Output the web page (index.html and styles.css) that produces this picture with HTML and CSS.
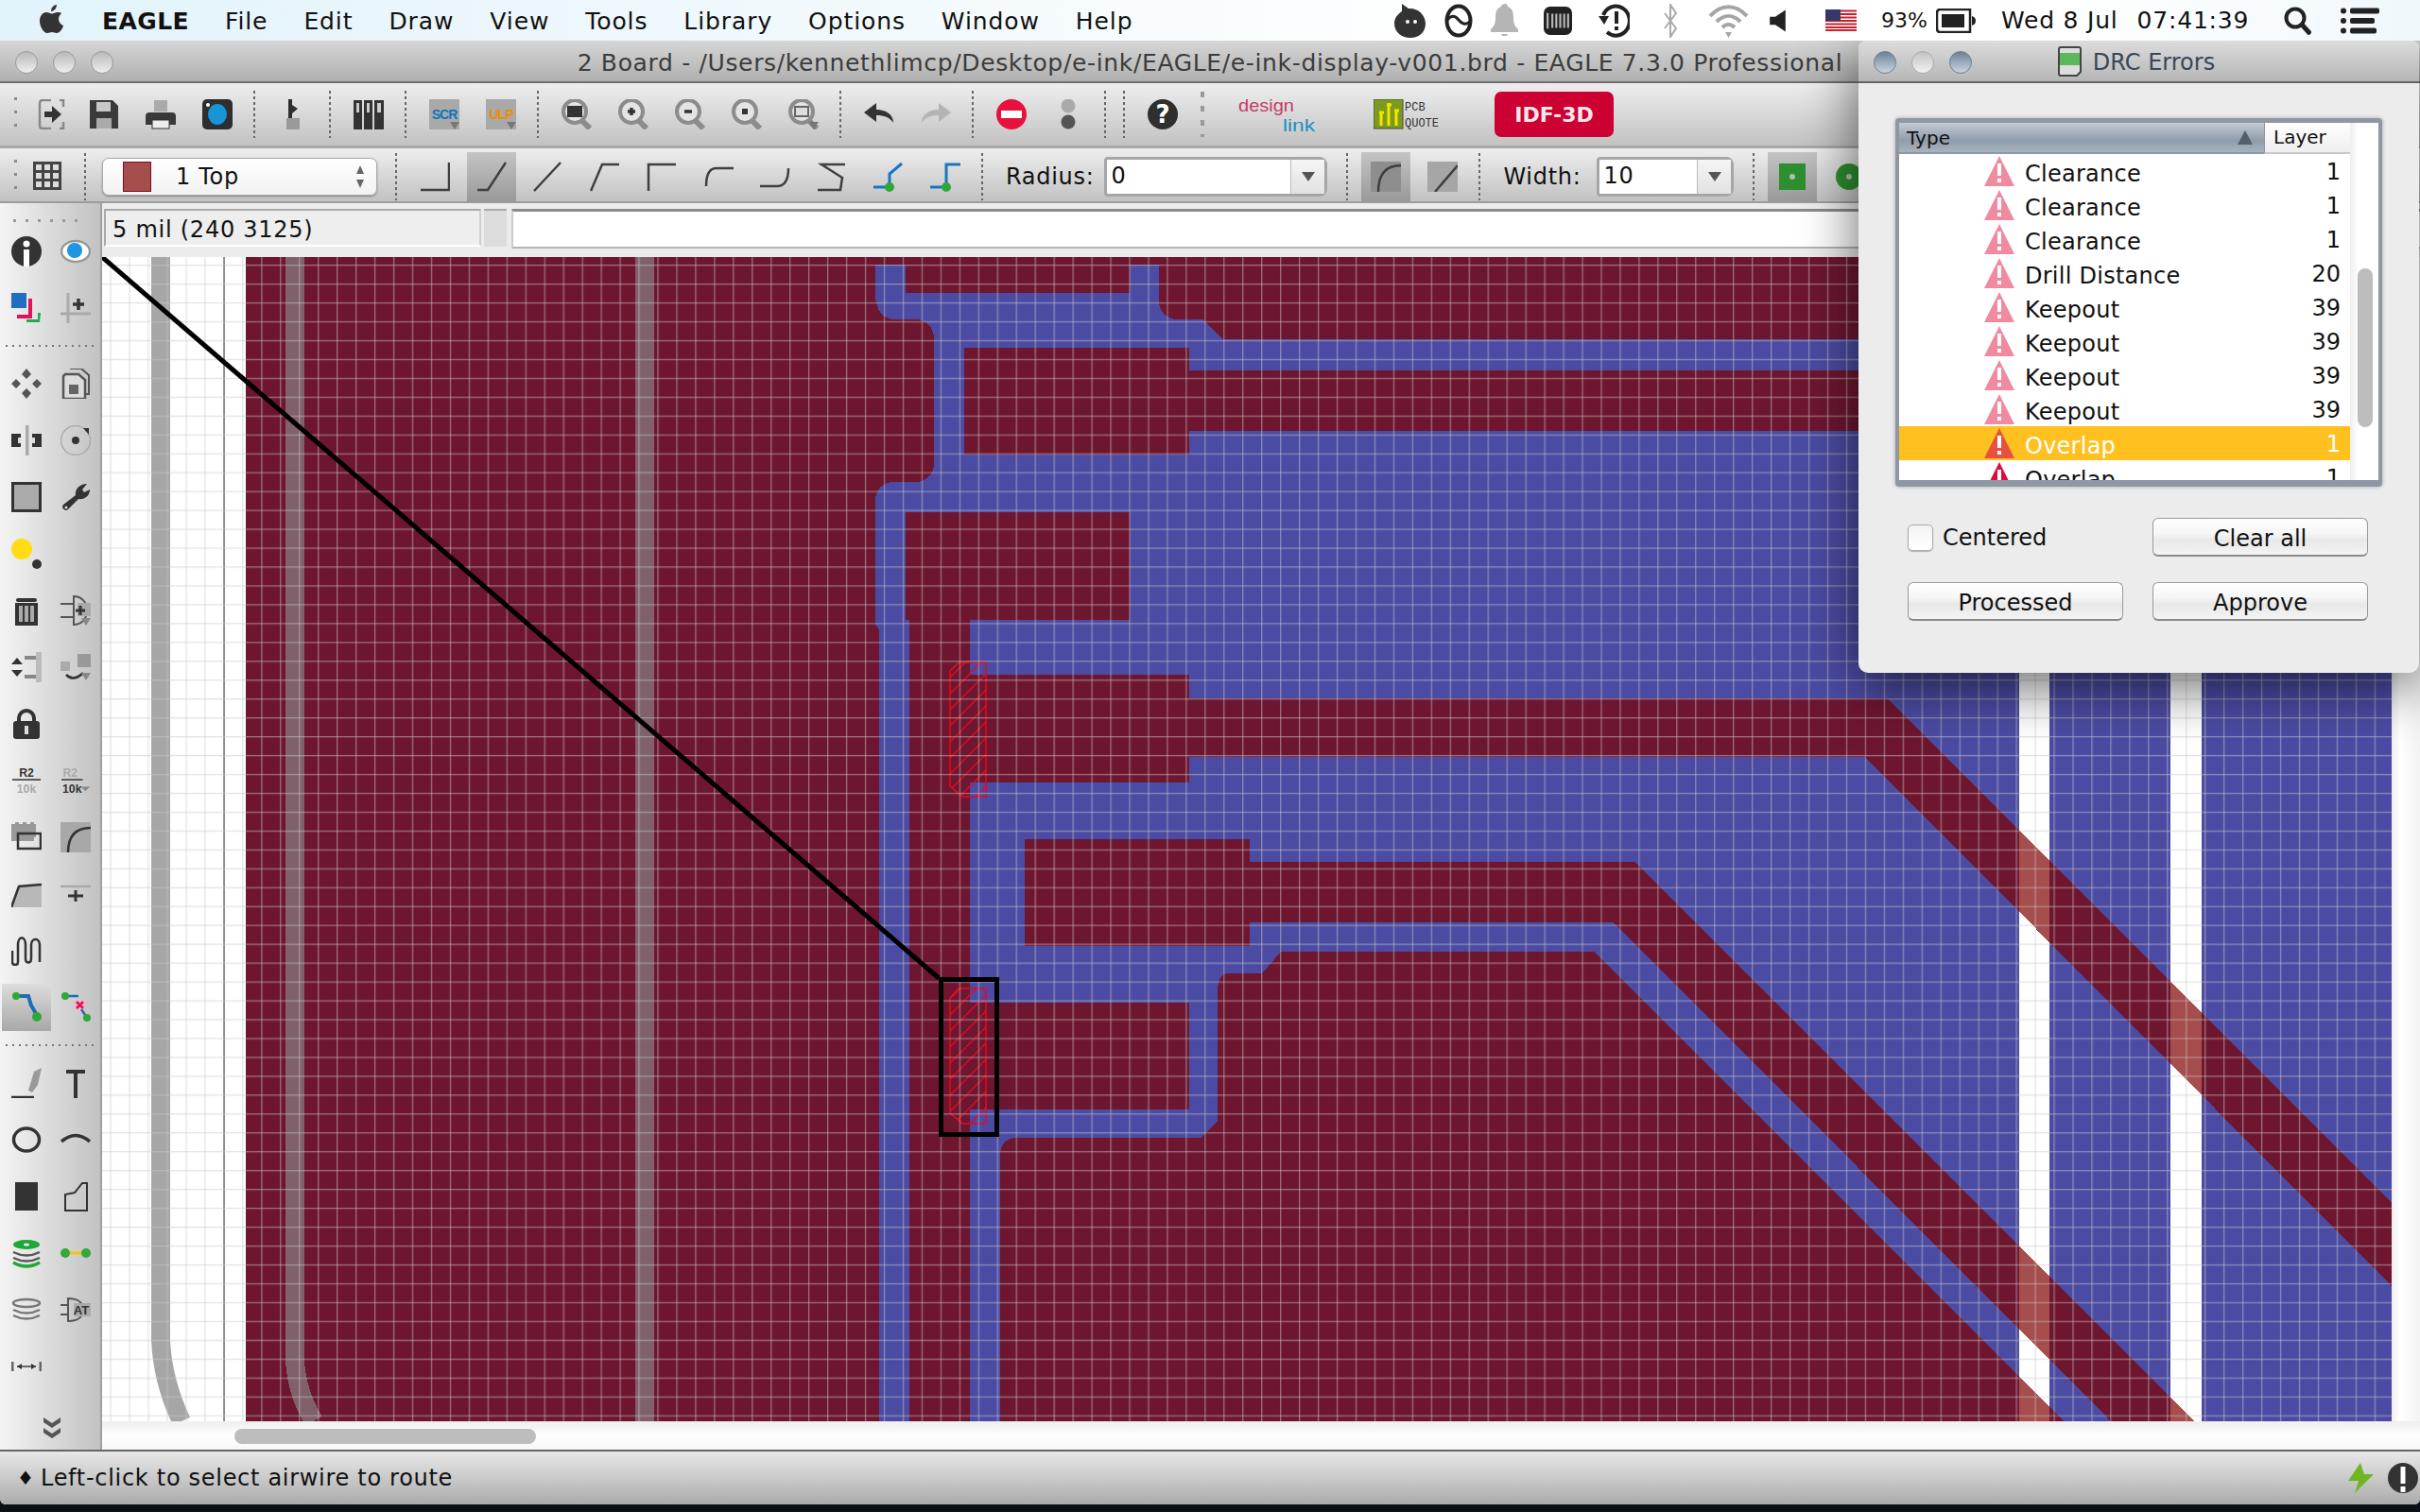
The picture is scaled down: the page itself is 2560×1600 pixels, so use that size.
FILE: index.html
```html
<!DOCTYPE html>
<html lang="en">
<head>
  <meta charset="UTF-8">
  <title>EAGLE - e-ink-display-v001.brd</title>
  <link rel="stylesheet" href="styles.css">
</head>
<body>

<svg class="defs" width="0" height="0">
  <symbol id="warn" viewBox="0 0 32 32">
    <path d="M16 0L32 32H0z" fill="currentColor"/>
    <rect x="14" y="8" width="4" height="13" fill="#fff"/>
    <rect x="14" y="24" width="4" height="4" fill="#fff"/>
  </symbol>
  <symbol id="lens" viewBox="0 0 32 32">
    <circle cx="14" cy="13" r="12" fill="#e4e4e4" stroke="#8c8c8c" stroke-width="4"/>
    <path d="M22 23l8 8" stroke="#8c8c8c" stroke-width="6"/>
  </symbol>
</svg>

<div class="menubar">
  <svg class="apple" viewBox="0 0 30 30"><path d="M21 8c-3 0-4 1.500-6 1.500S12 8 9 8C5 8 2 12 2 17c0 6 4 13 8 13 2 0 3-1 5-1s3 1 5 1c3 0 6-4 7-8-3-1-5-4-5-7 0-2 1-4 3-6-1-1-2-1-4-1zM20 0c0 4-3 7-6 7 0-4 3-7 6-7z" fill="#333"/></svg>
  <nav class="menus">
    <b>EAGLE</b><span>File</span><span>Edit</span><span>Draw</span><span>View</span><span>Tools</span><span>Library</span><span>Options</span><span>Window</span><span>Help</span>
  </nav>
  <div class="status-items">
    <svg class="st st-a" viewBox="0 0 33 36"><path d="M8 0l7 5c9-1 18 6 18 16 0 9-7 15-16 15S0 30 0 21C0 14 5 10 8 8z" fill="#333"/><circle cx="14" cy="19" r="2" fill="#fff"/><circle cx="22" cy="19" r="2" fill="#fff"/></svg>
    <svg class="st st-b" viewBox="0 0 30 36"><ellipse cx="15" cy="18" rx="12.500" ry="15.500" fill="none" stroke="#222" stroke-width="4"/><path d="M3 17c5-6 9-4 12 0s7 6 12 2" fill="none" stroke="#222" stroke-width="3"/></svg>
    <svg class="st st-c" viewBox="0 0 29 36"><path d="M15 0c2 0 3 1 3 3 5 2 6 6 6 12 0 7 2 9 5 12v3H0v-3c3-3 5-5 5-12 0-6 1-10 6-12 0-2 2-3 4-3zM11 32h7c0 3-7 3-7 0z" fill="#b5b5b5"/></svg>
    <svg class="st st-d" viewBox="0 0 36 36"><rect width="36" height="36" rx="8" fill="#222"/><path d="M5 8v20M11 9v18M16 9v18M21 9v18M26 9v18M31 9v18" stroke="#bbb" stroke-width="2.500"/></svg>
    <svg class="st st-e" viewBox="0 0 33 36"><path d="M5 12A14.500 15.500 0 1 1 9 30" fill="none" stroke="#222" stroke-width="4"/><path d="M0 13h11l-5 9z" fill="#222"/><rect x="17" y="8" width="4" height="13" fill="#222"/><rect x="17" y="24" width="4" height="4" fill="#222"/></svg>
    <svg class="st st-f" viewBox="0 0 16 36"><path d="M2 10l12 16-6 9V1l6 9L2 26" fill="none" stroke="#aaa" stroke-width="2"/></svg>
    <svg class="st st-g" viewBox="0 0 43 36"><path d="M2 13C14 0 29 0 41 13M9 19c8-8 17-8 25 0M15 25c4-4 9-4 13 0" fill="none" stroke="#a5a5a5" stroke-width="4"/><path d="M18 30h7l-3.500 6z" fill="#a5a5a5"/></svg>
    <svg class="st st-h" viewBox="0 0 23 36"><path d="M0 12h8l15-10v32L8 24H0z" fill="#222"/></svg>
    <svg class="st st-i" viewBox="0 0 33 23"><rect width="33" height="23" fill="#fff"/><path d="M0 1.500h33M0 5h33M0 8.500h33M0 12h33M0 15.500h33M0 19h33M0 22h33" stroke="#c8202f" stroke-width="1.800"/><rect width="16" height="12" fill="#33396b"/></svg>
    <span class="st-pct">93%</span>
    <svg class="st st-bat" viewBox="0 0 43 26"><path d="M4 1h32v24H4Q1 25 1 21V5q0-4 3-4z" fill="none" stroke="#222" stroke-width="2.500"/><rect x="6" y="6" width="24" height="14" fill="#222"/><path d="M38 8q4 1 4 5t-4 5z" fill="#222"/></svg>
    <span class="st-date">Wed 8 Jul</span>
    <span class="st-time">07:41:39</span>
    <svg class="st st-s" viewBox="0 0 29 30"><circle cx="12" cy="12" r="9.500" fill="none" stroke="#222" stroke-width="4"/><path d="M19 19l9 10" stroke="#222" stroke-width="5"/></svg>
    <svg class="st st-l" viewBox="0 0 41 28"><circle cx="3" cy="3.500" r="3" fill="#222"/><circle cx="3" cy="14" r="3" fill="#222"/><circle cx="3" cy="24.500" r="3" fill="#222"/><rect x="10" y="0.500" width="31" height="6" rx="2" fill="#222"/><rect x="10" y="11" width="26" height="6" rx="2" fill="#222"/><rect x="10" y="21.500" width="28" height="6" rx="2" fill="#222"/></svg>
  </div>
</div>

<div class="main-win">
  <header class="titlebar">
    <div class="lights"><i></i><i></i><i></i></div>
    <span class="title-text">2 Board - /Users/kennethlimcp/Desktop/e-ink/EAGLE/e-ink-display-v001.brd - EAGLE 7.3.0 Professional</span>
  </header>

  <div class="toolbar tb1">
    <i class="handle"></i>
    <svg class="ico ico-open" viewBox="0 0 32 32"><path d="M15 1H6Q3 1 3 4V28Q3 31 6 31H15M24 1H28V8M28 24V31H24" fill="none" stroke="#888" stroke-width="2.500"/><path d="M8 13h8V7l10 9-10 9v-6H8z" fill="#333"/></svg>
    <svg class="ico" viewBox="0 0 32 32"><path d="M1 1h24l6 6v24H1z" fill="#3a3a3a"/><rect x="8" y="3" width="15" height="10" fill="#c8c8c8"/><rect x="8" y="20" width="16" height="11" fill="#aaa"/></svg>
    <svg class="ico" viewBox="0 0 32 32"><rect x="9" y="1" width="14" height="12" fill="#aaa"/><path d="M4 14h24q4 0 4 4v9H0v-9q0-4 4-4z" fill="#3a3a3a"/><rect x="7" y="22" width="18" height="9" fill="#eee" stroke="#333"/></svg>
    <svg class="ico" viewBox="0 0 32 32"><rect width="32" height="32" rx="5" fill="#2e2e2e"/><ellipse cx="16" cy="16" rx="10" ry="11" fill="#1894d8"/><circle cx="6" cy="6" r="2" fill="#fff"/></svg>
    <i class="sep"></i>
    <svg class="ico" viewBox="0 0 32 32"><path d="M11 0h4v6l6 4-6 5v5h-4z" fill="#2f2f2f"/><rect x="9" y="20" width="14" height="12" fill="#9a9a9a"/></svg>
    <i class="sep"></i>
    <svg class="ico" viewBox="0 0 32 32"><path d="M0 1h9v31H0zM11 1h9v31h-9zM22 1h10v31H22z" fill="#333"/><path d="M3 4h3v10H3zM14 4h3v10h-3zM25 4h4v10h-4z" fill="#ccc"/></svg>
    <i class="sep"></i>
    <svg class="ico" viewBox="0 0 32 32"><rect width="32" height="32" fill="#a9a9a9"/><text class="tag" x="16" y="21" fill="#0f75bd">SCR</text><path d="M22 24h10l-5 8z" fill="#777"/></svg>
    <svg class="ico" viewBox="0 0 32 32"><rect width="32" height="32" fill="#a9a9a9"/><text class="tag" x="16" y="21" fill="#f08c00">ULP</text><path d="M22 24h10l-5 8z" fill="#777"/></svg>
    <i class="sep"></i>
    <svg class="ico" viewBox="0 0 32 32"><use href="#lens"/><rect x="6" y="7" width="16" height="12" fill="#333"/></svg>
    <svg class="ico" viewBox="0 0 32 32"><use href="#lens"/><path d="M10 13h8M14 9v8" stroke="#333" stroke-width="3.500"/></svg>
    <svg class="ico" viewBox="0 0 32 32"><use href="#lens"/><path d="M10 13h8" stroke="#333" stroke-width="3.500"/></svg>
    <svg class="ico" viewBox="0 0 32 32"><use href="#lens"/><rect x="11" y="10" width="6" height="6" fill="#333"/></svg>
    <svg class="ico" viewBox="0 0 32 32"><use href="#lens"/><rect x="7" y="8" width="14" height="10" fill="#ddd" stroke="#666" stroke-width="2"/><path d="M22 24h10l-5 8z" fill="#777"/></svg>
    <i class="sep"></i>
    <svg class="ico" viewBox="0 0 32 32"><path d="M0 14L13 4v7c10 0 18 5 18 14-4-6-10-8-18-8v7z" fill="#333"/></svg>
    <svg class="ico" viewBox="0 0 32 32"><path d="M32 14L19 4v7C9 11 1 16 1 25c4-6 10-8 18-8v7z" fill="#b4b4b4"/></svg>
    <i class="sep"></i>
    <svg class="ico" viewBox="0 0 32 32"><circle cx="16" cy="16" r="16" fill="#e6123d"/><rect x="5" y="12" width="22" height="8" fill="#fff"/></svg>
    <svg class="ico" viewBox="0 0 32 32"><circle cx="16" cy="7" r="7.500" fill="#aaa"/><circle cx="16" cy="24" r="7.500" fill="#555"/></svg>
    <i class="sep"></i><i class="sep"></i>
    <svg class="ico" viewBox="0 0 32 32"><circle cx="16" cy="16" r="16" fill="#2f2f2f"/><text class="q" x="16" y="25" fill="#fff">?</text></svg>
    <i class="sep sep-bold"></i>
    <svg class="logo-dl" viewBox="0 0 82 42"><text class="dl" x="0" y="18" textLength="59" lengthAdjust="spacingAndGlyphs" fill="#c83a66">design</text><text class="dl" x="47" y="39" textLength="34" lengthAdjust="spacingAndGlyphs" fill="#1a8fc0">link</text></svg>
    <svg class="logo-pcb" viewBox="0 0 70 32"><rect width="31" height="31" fill="#7c9a1e" stroke="#445"/><path d="M8 28V14M16 28V4M24 28V12M6 14h5M14 6h5M22 12h5" stroke="#f4e600" stroke-width="3"/><text class="pq" x="33" y="12">PCB</text><text class="pq" x="33" y="29">QUOTE</text></svg>
    <div class="idf">IDF-3D</div>
  </div>

  <div class="toolbar tb2">
    <i class="handle"></i>
    <svg class="ico" viewBox="0 0 32 32"><rect width="30" height="30" fill="#444"/><path d="M3 3h6v6H3zM12 3h6v6h-6zM21 3h6v6h-6zM3 12h6v6H3zM12 12h6v6h-6zM21 12h6v6h-6zM3 21h6v6H3zM12 21h6v6h-6zM21 21h6v6h-6z" fill="#ddd"/></svg>
    <i class="sep"></i>
    <div class="layer-select">
      <i class="swatch"></i><span>1 Top</span>
      <svg class="updown" viewBox="0 0 10 24"><path d="M5 0l4 9H1zM5 24l-4-9h8z" fill="#666"/></svg>
    </div>
    <i class="sep"></i>
    <svg class="ico w" viewBox="0 0 32 32"><path d="M1 30H31V1"/></svg>
    <svg class="ico w on" viewBox="0 0 32 32"><path d="M1 30H12L31 1"/></svg>
    <svg class="ico w" viewBox="0 0 32 32"><path d="M1 31L29 1"/></svg>
    <svg class="ico w" viewBox="0 0 32 32"><path d="M1 31L13 3H31"/></svg>
    <svg class="ico w" viewBox="0 0 32 32"><path d="M2 31V3H31"/></svg>
    <svg class="ico w" viewBox="0 0 32 32"><path d="M3 26Q3 7 14 7H32"/></svg>
    <svg class="ico w" viewBox="0 0 32 32"><path d="M0 26H18Q30 26 30 7"/></svg>
    <svg class="ico w" viewBox="0 0 32 32"><path d="M30 3H5L27 17L25 30H1"/></svg>
    <svg class="ico" viewBox="0 0 32 32"><path d="M0 27H13M17 27V13L30 2" fill="none" stroke="#1976c2" stroke-width="3"/><circle cx="17" cy="27" r="5" fill="#2fa838"/></svg>
    <svg class="ico" viewBox="0 0 32 32"><path d="M0 27H13M17 27V3H32" fill="none" stroke="#1976c2" stroke-width="3"/><circle cx="17" cy="27" r="5" fill="#2fa838"/></svg>
    <i class="sep"></i>
    <label class="lbl">Radius:</label>
    <div class="combo combo-r"><span>0</span><b><i></i></b></div>
    <i class="sep"></i>
    <svg class="ico w on" viewBox="0 0 32 32"><rect width="32" height="32" fill="#8e8e8e"/><path d="M8 32Q8 4 32 4"/></svg>
    <svg class="ico w" viewBox="0 0 32 32"><rect width="32" height="32" fill="#a6a6a6"/><path d="M8 32L32 4"/></svg>
    <i class="sep"></i>
    <label class="lbl">Width:</label>
    <div class="combo combo-w"><span>10</span><b><i></i></b></div>
    <i class="sep"></i>
    <svg class="ico on" viewBox="0 0 32 32"><rect x="2" y="2" width="28" height="28" fill="#2e8f2e"/><circle cx="16" cy="16" r="3" fill="#bbb"/></svg>
    <svg class="ico" viewBox="0 0 32 32"><circle cx="16" cy="16" r="14" fill="#2e8f2e"/><circle cx="16" cy="16" r="3" fill="#bbb"/></svg>
  </div>

  <div class="workspace">
    <aside class="tools">
      <i class="tool-handle"></i>
      <div class="tool-grp">
        <svg class="ico" viewBox="0 0 32 32"><circle cx="16" cy="16" r="16" fill="#333"/><rect x="13" y="14" width="6" height="18" fill="#fff"/><circle cx="16" cy="8" r="3.500" fill="#fff"/></svg>
        <svg class="ico" viewBox="0 0 32 32"><ellipse cx="16" cy="16" rx="15" ry="11" fill="#fff" stroke="#999" stroke-width="2.500"/><ellipse cx="15" cy="15" rx="8" ry="8" fill="#1d95e0"/></svg>
        <svg class="ico" viewBox="0 0 32 32"><path d="M8 27h12V10h4v21H8z" transform="translate(-2 -4)" fill="#e2135a"/><path d="M16 26h14l1-10h-3v7H16z" transform="translate(0 5)" fill="#22a85a"/><rect width="16" height="16" fill="#1f6fc0"/></svg>
        <svg class="ico" viewBox="0 0 32 32"><path d="M8 0v32M0 22h32" stroke="#aaa" stroke-width="3"/><path d="M19 6v12M13 12h12" stroke="#333" stroke-width="3.500"/></svg>
      </div>
      <i class="tool-sep"></i>
      <div class="tool-grp">
        <svg class="ico" viewBox="0 0 32 32"><path d="M16 0l5 6-5 5-5-5zM16 21l5 5-5 6-5-6zM0 16l5-5 5 5-5 5zM22 16l5-5 5 5-5 5z" fill="#555"/></svg>
        <svg class="ico" viewBox="0 0 32 32"><path d="M10 0h12l8 7v20H24" fill="none" stroke="#555" stroke-width="2"/><path d="M5 6h14l7 6v20H3V8z" fill="#ddd" stroke="#555" stroke-width="2.500"/><rect x="9" y="17" width="10" height="10" fill="#666"/></svg>
        <svg class="ico" viewBox="0 0 32 32"><rect x="15" width="3.500" height="32" fill="#aaa"/><path d="M0 9h10v14H0zM22 9h10v14H22z" fill="#333"/><path d="M7 13h3v6H7zM22 13h3v6h-3z" fill="#ddd"/></svg>
        <svg class="ico" viewBox="0 0 32 32"><circle cx="16" cy="16" r="15.500" fill="none" stroke="#aaa" stroke-width="1.500"/><circle cx="16" cy="16" r="4" fill="#333"/><path d="M24 3h6v7z" fill="#333"/></svg>
        <svg class="ico" viewBox="0 0 32 32"><rect x="1.500" y="1.500" width="29" height="29" fill="#aaa" stroke="#333" stroke-width="3"/></svg>
        <svg class="ico" viewBox="0 0 32 32"><path d="M3 24L16 14c-1-6 4-12 12-12l-5 6 2 3 6-3c0 7-6 11-12 10L8 29c-3 3-8-2-5-5z" fill="#333"/><circle cx="6" cy="27" r="1.500" fill="#ddd"/></svg>
        <svg class="ico" viewBox="0 0 32 32"><circle cx="11" cy="11" r="11" fill="#ffdc14"/><circle cx="27" cy="27" r="5" fill="#333"/></svg>
        <i class="blank"></i>
        <svg class="ico" viewBox="0 0 32 32"><rect x="5" y="3" width="22" height="4" rx="2" fill="#333"/><path d="M4 8h24v24H4z" fill="#333"/><path d="M8 11h4v17H8zM14 11h4v17h-4zM20 11h4v17h-4z" fill="#aaa"/></svg>
        <svg class="ico" viewBox="0 0 32 32"><path d="M14 1c8 0 14 6 14 15s-6 15-14 15zM0 9h14M0 23h14" fill="none" stroke="#555" stroke-width="2"/><rect x="18" y="8" width="14" height="14" fill="#aaa"/><path d="M16 16h10M21 11v10" stroke="#333" stroke-width="3"/><path d="M22 24h10l-5 8z" fill="#888"/></svg>
        <svg class="ico" viewBox="0 0 32 32"><path d="M6 6l6 7H0zM6 26l6-7H0z" fill="#333"/><path d="M14 6h14M14 26h14" stroke="#888" stroke-width="4"/><rect x="26" width="6" height="32" fill="#bbb"/></svg>
        <svg class="ico" viewBox="0 0 32 32"><rect y="10" width="10" height="10" fill="#aaa"/><rect x="18" y="2" width="14" height="14" fill="#999"/><path d="M6 24q8 8 18-2" fill="none" stroke="#333" stroke-width="2.500"/><path d="M22 22h10l-5 8z" fill="#888"/></svg>
        <svg class="ico" viewBox="0 0 32 32"><path d="M6 14V10a10 10 0 0 1 20 0v4h-4V10a6 6 0 0 0-12 0v4z" fill="#333"/><rect x="2" y="13" width="28" height="19" rx="3" fill="#333"/><rect x="14" y="18" width="4" height="9" fill="#ddd"/></svg>
        <i class="blank"></i>
        <svg class="ico" viewBox="0 0 32 34"><text class="r2" x="16" y="13" fill="#333">R2</text><rect y="15" width="32" height="2" fill="#555"/><text class="r2" x="16" y="31" fill="#aaa">10k</text></svg>
        <svg class="ico" viewBox="0 0 32 34"><text class="r2" x="10" y="13" fill="#aaa">R2</text><rect y="15" width="24" height="2" fill="#555"/><text class="r2" x="12" y="31" fill="#333">10k</text><path d="M22 24h10l-5 5z" fill="#888"/></svg>
        <svg class="ico" viewBox="0 0 32 32"><path d="M0 2h4V0h4v2h4V0h4v2h4V0h4v2h2v14h-2v4H0z" fill="#999"/><rect x="7" y="12" width="24" height="16" fill="none" stroke="#333" stroke-width="2.500"/></svg>
        <svg class="ico" viewBox="0 0 32 32"><rect width="32" height="32" fill="#a8a8a8"/><path d="M8 32Q8 6 32 6" fill="none" stroke="#333" stroke-width="2.500"/></svg>
        <svg class="ico" viewBox="0 0 32 32"><path d="M0 28L8 8l24-2v24H0z" fill="#b8b8b8"/><path d="M0 30L8 8l24-2" fill="none" stroke="#333" stroke-width="2.500"/></svg>
        <svg class="ico" viewBox="0 0 32 32"><path d="M0 8h32" stroke="#aaa" stroke-width="2.500"/><path d="M16 12v12M8 18h16" stroke="#333" stroke-width="3"/></svg>
        <svg class="ico" viewBox="0 0 32 32"><path d="M1 16v12c0 4 6 4 6 0V10c0-10 8-10 8 0v14c0 6 6 6 6 0V10c0-8 9-8 9 0v18" fill="none" stroke="#333" stroke-width="2.500"/></svg>
        <i class="blank"></i>
        <div class="route on-cell"><svg class="ico" viewBox="0 0 32 32"><path d="M5 4h13l3 10 7 12" fill="none" stroke="#1a6fb5" stroke-width="4"/><circle cx="5" cy="4" r="4" fill="#2fa838"/><circle cx="27" cy="26" r="5" fill="#2fa838"/></svg></div>
        <svg class="ico" viewBox="0 0 32 32"><path d="M5 4h14M22 18l6 9" stroke="#1a6fb5" stroke-width="2.500"/><circle cx="5" cy="4" r="4" fill="#2fa838"/><circle cx="28" cy="27" r="4" fill="#2fa838"/><rect x="15" y="9" width="11" height="9" fill="#f4b5c5"/><path d="M17 10l7 7M24 10l-7 7" stroke="#e2135a" stroke-width="2.500"/></svg>
      </div>
      <i class="tool-sep"></i>
      <div class="tool-grp">
        <svg class="ico" viewBox="0 0 32 32"><path d="M0 31h24" stroke="#333" stroke-width="2.500"/><path d="M24 4l8-4-4 18-6 8-4-2z" fill="#999"/></svg>
        <svg class="ico" viewBox="0 0 32 32"><path d="M6 2h20v4H18v26h-4V6H6z" fill="#333"/></svg>
        <svg class="ico" viewBox="0 0 32 32"><ellipse cx="16" cy="16" rx="13.500" ry="12" fill="none" stroke="#333" stroke-width="3.500"/></svg>
        <svg class="ico" viewBox="0 0 32 32"><path d="M1 18Q16 5 31 18" fill="none" stroke="#333" stroke-width="3.500"/></svg>
        <svg class="ico" viewBox="0 0 32 32"><rect x="4" y="1" width="24" height="30" fill="#333"/></svg>
        <svg class="ico" viewBox="0 0 32 32"><path d="M5 31V14l10-2 8-10h5v29z" fill="none" stroke="#333" stroke-width="2"/></svg>
        <svg class="ico" viewBox="0 0 32 32"><ellipse cx="16" cy="7" rx="14" ry="5" fill="#1ea838"/><ellipse cx="16" cy="7" rx="3" ry="1.500" fill="#eee"/><path d="M2 15q14 7 28 0M2 21q14 7 28 0" fill="none" stroke="#555" stroke-width="2.500"/><path d="M2 26q14 8 28 0" fill="none" stroke="#1ea838" stroke-width="3.500"/></svg>
        <svg class="ico" viewBox="0 0 32 32"><path d="M4 16h24" stroke="#f2c40e" stroke-width="3"/><circle cx="5" cy="16" r="5" fill="#35a838"/><circle cx="27" cy="16" r="5" fill="#35a838"/></svg>
        <svg class="ico" viewBox="0 0 32 32"><ellipse cx="16" cy="9" rx="14" ry="4" fill="none" stroke="#777" stroke-width="2.500"/><path d="M2 16q14 7 28 0M2 22q14 7 28 0" fill="none" stroke="#777" stroke-width="2.500"/></svg>
        <svg class="ico" viewBox="0 0 32 32"><path d="M8 4c12 0 16 6 16 12s-4 12-16 12zM0 11h8M0 21h8" fill="#ccc" stroke="#555" stroke-width="2"/><rect x="14" y="9" width="18" height="14" fill="#aaa"/><text class="r2" x="22" y="21" fill="#333">AT</text></svg>
        <svg class="ico" viewBox="0 0 32 32"><path d="M1 11v10M31 11v10" stroke="#666" stroke-width="3"/><path d="M6 16h20" stroke="#666" stroke-width="2"/><path d="M6 16l5-3v6zM26 16l-5-3v6z" fill="#333"/></svg>
        <i class="blank"></i>
      </div>
      <svg class="chevrons" viewBox="0 0 18 26"><path d="M0 2l9 6 9-6v5l-9 6-9-6zM0 13l9 6 9-6v5l-9 6-9-6z" fill="#555"/></svg>
    </aside>

    <div class="editor">
      <div class="coord-row">
        <div class="coord-field">5 mil (240 3125)</div>
        <i class="coord-split"></i>
        <div class="cmd-input"></div>
      </div>
      <div class="canvas-row">
        <svg class="board" viewBox="108 272 2422 1232" width="2422" height="1232">
          <defs>
            <pattern id="grid" patternUnits="userSpaceOnUse" x="116.500" y="280" width="19.960" height="19.960">
              <rect width="1.300" height="19.960" fill="#c8c8c8" fill-opacity=".5"/>
              <rect width="19.960" height="1.300" fill="#c8c8c8" fill-opacity=".5"/>
            </pattern>
            <pattern id="hatch" patternUnits="userSpaceOnUse" x="1005" y="700" width="17" height="17">
              <path d="M0 17L17 0" stroke="#e8081f" stroke-width="1.300"/>
            </pattern>
            <g id="copper">
              <path d="M1020 368H1258V392H2530V456H1258V481H1020z"/>
              <path d="M958 542H1195V656H958z"/>
              <path d="M1026 714H1258V739H1996L2530 1273V1361L1973 801H1258V828H1026z"/>
              <path d="M1084 888H1322V912H1729L2321 1504H2233L1707 976H1322V1001H1084z"/>
              <path d="M1026 1061H1258V1174H1026z"/>
              <path d="M1058 1504V1223Q1058 1206 1073 1204H1270L1288 1187V1048Q1289 1032 1297 1030H1335L1355 1007H1686L2183 1504z"/>
            </g>
            <clipPath id="slots"><rect x="2136" y="272" width="32" height="1232"/><rect x="2296" y="272" width="33" height="1232"/></clipPath>
          </defs>
          <rect x="108" y="272" width="2422" height="1232" fill="#fff"/>
          <path d="M170 272V1418Q172 1462 192 1504" fill="none" stroke="#a6a6a6" stroke-width="20"/>
          <rect x="236" y="272" width="2" height="1232" fill="#7a7a7a"/>
          <g shape-rendering="crispEdges">
            <rect x="260" y="272" width="2270" height="1232" fill="#6e1630"/>
            <path d="M312 272V1440Q314 1474 332 1504" fill="none" stroke="#80606a" stroke-width="20"/>
            <rect x="672" y="272" width="20" height="1232" fill="#80606a"/>
            <path d="M926 280H958V310H1195V280H1226V320Q1228 336 1244 338H1272L1293 359H2530V1504H1026V656H962V1504H930V667L926 660V528Q928 512 944 510H970Q986 508 988 492V357Q986 340 970 338H944Q928 336 926 314z" fill="#4b4ba3"/>
            <rect x="2136" y="272" width="32" height="1232" fill="#fff"/>
            <rect x="2296" y="272" width="33" height="1232" fill="#fff"/>
            <use href="#copper" fill="#6e1630"/>
            <use href="#copper" fill="#a64d4d" clip-path="url(#slots)"/>
          </g>
          <path class="drc" d="M1005 710L1014 701H1043V843H1018L1005 832z"/>
          <path class="drc" d="M1005 1056L1014 1046H1043V1189H1018L1005 1178z"/>
          <rect x="108" y="272" width="2422" height="1232" fill="url(#grid)"/>
          <path d="M108 272L993 1035" stroke="#000" stroke-width="5"/>
          <rect x="995.500" y="1036.500" width="59" height="164" fill="none" stroke="#000" stroke-width="5"/>
        </svg>
        <div class="vscroll"></div>
      </div>
      <div class="hscroll"><i></i></div>
    </div>
  </div>

  <footer class="statusbar">
    <span class="mark">&#9830;</span><span>Left-click to select airwire to route</span>
    <svg class="bolt" viewBox="0 0 28 32"><path d="M13 0L0 19h11l-4 13 20-20H17z" fill="#70b622"/></svg>
    <svg class="alert" viewBox="0 0 32 32"><circle cx="16" cy="16" r="16" fill="#333"/><rect x="13.500" y="4" width="5" height="18" fill="#fff"/><rect x="13.500" y="25" width="5" height="6" fill="#fff"/></svg>
  </footer>
</div>

<section class="drc-win">
  <header class="drc-title">
    <div class="lights lights-blue"><i></i><i></i><i></i></div>
    <svg class="doc" viewBox="0 0 25 32"><path d="M3 1h19q2 0 2 2v24l-4 4H3q-2 0-2-2V3q0-2 2-2z" fill="#ddd" stroke="#444" stroke-width="2"/><rect x="2" y="7" width="21" height="13" fill="#5cb85c"/></svg>
    <span>DRC Errors</span>
  </header>
  <div class="err-list">
    <div class="err-table">
      <div class="err-head">
        <div class="col-type">Type<i></i></div>
        <div class="col-layer">Layer</div>
      </div>
      <div class="err-row"><svg><use href="#warn"/></svg><span>Clearance</span><em>1</em></div>
      <div class="err-row"><svg><use href="#warn"/></svg><span>Clearance</span><em>1</em></div>
      <div class="err-row"><svg><use href="#warn"/></svg><span>Clearance</span><em>1</em></div>
      <div class="err-row"><svg><use href="#warn"/></svg><span>Drill Distance</span><em>20</em></div>
      <div class="err-row"><svg><use href="#warn"/></svg><span>Keepout</span><em>39</em></div>
      <div class="err-row"><svg><use href="#warn"/></svg><span>Keepout</span><em>39</em></div>
      <div class="err-row"><svg><use href="#warn"/></svg><span>Keepout</span><em>39</em></div>
      <div class="err-row"><svg><use href="#warn"/></svg><span>Keepout</span><em>39</em></div>
      <div class="err-row sel"><svg><use href="#warn"/></svg><span>Overlap</span><em>1</em></div>
      <div class="err-row open"><svg><use href="#warn"/></svg><span>Overlap</span><em>1</em></div>
    </div>
    <div class="err-scroll"><i></i></div>
  </div>
  <div class="drc-actions">
    <label class="check"><i></i>Centered</label>
    <button>Clear all</button>
    <button>Processed</button>
    <button>Approve</button>
  </div>
</section>

</body>
</html>
```

FILE: styles.css
```css
* { box-sizing: border-box; }
html, body { margin: 0; }
body {
  width: 2560px;
  height: 1600px;
  overflow: hidden;
  position: relative;
  background: #0b1016;
  font-family: 'DejaVu Sans', sans-serif;
  font-size: 24px;
  color: #111;
}
i { display: block; font-style: normal; }
.defs { position: absolute; }
.ico { width: 32px; height: 32px; flex: none; }

/* menu bar */
.menubar {
  position: relative;
  z-index: 3;
  height: 43px;
  display: flex;
  align-items: center;
  padding: 2px 0 0 40px;
  background: linear-gradient(90deg, #e2f3fb, #f6fbfd 45%, #fff 60%, #fff 85%, #f0f8fc);
  font-size: 25px;
  letter-spacing: .9px;
}
.apple { width: 30px; height: 30px; margin-top: -6px; }
.menus { display: flex; gap: 38px; margin-left: 38px; color: #111; }
.menus b { letter-spacing: .4px; }
.status-items { display: flex; align-items: center; position: absolute; left: 1475px; top: 0; height: 43px; letter-spacing: .8px; }
.st { flex: none; height: 36px; }
.st-a { width: 33px; }
.st-b { width: 30px; margin-left: 20px; }
.st-c { width: 29px; margin-left: 19px; }
.st-d { width: 36px; margin-left: 24px; height: 30px; }
.st-e { width: 33px; margin-left: 25px; }
.st-f { width: 16px; margin-left: 35px; }
.st-g { width: 43px; margin-left: 32px; }
.st-h { width: 23px; margin-left: 19px; height: 26px; }
.st-i { width: 33px; height: 23px; margin-left: 39px; }
.st-pct { margin-left: 26px; font-size: 22px; letter-spacing: 0; }
.st-bat { width: 43px; height: 26px; margin-left: 9px; }
.st-date { margin-left: 26px; }
.st-time { margin-left: 20px; }
.st-s { width: 29px; height: 30px; margin-left: 37px; }
.st-l { width: 41px; height: 28px; margin-left: 31px; }

/* main window */
.main-win { height: 1549px; background: #ddd; border-radius: 0 0 6px 6px; overflow: hidden; }
.titlebar {
  height: 45px;
  position: relative;
  display: flex;
  align-items: center;
  justify-content: center;
  padding-top: 3px;
  background: linear-gradient(#d6d6d6, #b0b0b0);
  border-bottom: 2px solid #6f6f6f;
  color: #3c3c3c;
  font-size: 25px;
  letter-spacing: .65px;
}
.lights { position: absolute; left: 16px; top: 11px; display: flex; gap: 16px; }
.lights i {
  width: 24px;
  height: 24px;
  border-radius: 50%;
  border: 1px solid #9a9a9a;
  background: linear-gradient(#b9b9b9, #eee);
}
.lights-blue i { background: linear-gradient(#6d8196, #c8d6e0); border-color: #6f7f8d; }
.lights-blue i:nth-child(2) { background: linear-gradient(#c2c2c2, #f2f2f2); border-color: #aaa; }

.toolbar {
  display: flex;
  align-items: center;
  padding-left: 15px;
  background: linear-gradient(#eeeeee, #c2c2c2);
  overflow: hidden;
}
.tb1 { height: 69px; border-bottom: 3px solid #a8a8a8; }
.tb2 { height: 58px; padding-top: 3px; border-bottom: 2px solid #9c9c9c; letter-spacing: .7px; }
.toolbar .ico + .ico { margin-left: 28px; }
.handle { width: 3px; height: 36px; margin-right: 21px; background: repeating-linear-gradient(#8a8a8a 0 3px, transparent 3px 14px); }
.tb2 .handle { margin-right: 17px; }
.ico-open { margin-right: -5px; }
.sep { width: 2px; height: 50px; margin: 0 24px 0 22px; flex: none; background: repeating-linear-gradient(#666 0 3px, transparent 3px 6px); }
.sep + .sep { margin-left: -6px; }
.sep-bold { width: 4px; background: repeating-linear-gradient(#999 0 6px, transparent 6px 15px); margin-left: 24px; margin-right: 36px; height: 48px; }
.tag { font: bold 14px 'Liberation Sans Narrow', 'Liberation Sans', sans-serif; text-anchor: middle; letter-spacing: -1px; }
.q { font: bold 26px 'DejaVu Sans', sans-serif; text-anchor: middle; }
.logo-dl { width: 82px; height: 42px; flex: none; }
.dl { font: 19px 'Liberation Sans', sans-serif; }
.logo-pcb { width: 70px; height: 32px; margin-left: 61px; flex: none; }
.pq { font: 12px 'Liberation Mono', monospace; letter-spacing: 0; fill: #333; }
.idf {
  margin-left: 58px;
  width: 126px;
  height: 48px;
  flex: none;
  display: flex;
  align-items: center;
  justify-content: center;
  border-radius: 7px;
  background: #cc0033;
  color: #f6e6ea;
  font-size: 22px;
  font-weight: bold;
}

.layer-select {
  width: 291px;
  height: 40px;
  margin: 0 -3px 0 -7px;
  flex: none;
  display: flex;
  align-items: center;
  padding-left: 21px;
  background: linear-gradient(#fff, #f2f2f2);
  border: 1px solid #aaa;
  border-radius: 7px;
  box-shadow: 0 1px 2px rgba(0,0,0,.35);
}
.swatch { width: 30px; height: 32px; background: #a64d4d; border: 1px solid #7a1020; }
.layer-select span { margin-left: 26px; }
.updown { width: 10px; height: 24px; margin-left: auto; margin-right: 12px; }
.w path { fill: none; stroke: #3f3f3f; stroke-width: 2.500; }
.toolbar .ico.on {
  width: 52px;
  height: 52px;
  padding: 10px;
  margin-left: 18px;
  margin-right: -10px;
  background: linear-gradient(#c4c4c4, #999);
}
.toolbar .sep + .ico.on { margin-left: -10px; }
.lbl { font-size: 24px; flex: none; }
.combo {
  height: 42px;
  flex: none;
  display: flex;
  background: #fff;
  border: 3px solid #a6a6a6;
  border-radius: 4px 8px 8px 4px;
  line-height: 34px;
}
.combo span { flex: 1; padding-left: 4px; }
.combo b { width: 36px; display: flex; align-items: center; justify-content: center; border-left: 1px solid #bbb; background: linear-gradient(#f5f5f5, #e2e2e2); }
.combo b i { border: 7px solid transparent; border-top: 10px solid #555; border-bottom: 0; }
.combo-r { width: 236px; margin-left: 11px; margin-right: -2px; }
.combo-w { width: 145px; margin-left: 17px; margin-right: -2px; }

.workspace { display: flex; height: 1319px; }
.tools {
  width: 108px;
  flex: none;
  display: flex;
  flex-direction: column;
  background: linear-gradient(90deg, #f4f4f4, #c2c2c2);
  border-right: 2px solid #a0a0a0;
}
.tool-handle { height: 21px; margin: 0 14px; padding-top: 17px; background: repeating-linear-gradient(90deg, #999 0 3px, transparent 3px 13px) 0 17px / 100% 3px no-repeat; }
.tool-grp { display: grid; grid-template-columns: 32px 32px; column-gap: 20px; grid-auto-rows: 60px; padding-left: 12px; align-items: center; }
.tool-sep { height: 20px; margin: 0 2px 0 6px; background: repeating-linear-gradient(90deg, #777 0 2px, transparent 2px 7px) 0 9px / 100% 2px no-repeat; }
.on-cell { width: 52px; height: 50px; margin-left: -10px; padding: 9px 10px; background: linear-gradient(#ddd, #a8a8a8); }
.chevrons { width: 18px; height: 26px; margin: 22px 0 0 46px; }
.r2 { font: bold 13px 'Liberation Sans', sans-serif; text-anchor: middle; }

.editor { flex: 1; min-width: 0; display: flex; flex-direction: column; }
.coord-row { height: 57px; flex: none; display: flex; padding-top: 6px; background: #ececec; }
.coord-field { width: 399px; height: 40px; margin-left: 2px; padding: 2px 0 0 7px; font-size: 24px; letter-spacing: .75px; line-height: 36px; background: #eee; border: 2px solid; border-color: #a9a9a9 #cfcfcf #fff #a9a9a9; }
.coord-split { width: 24px; height: 40px; margin-left: 3px; background: #dcdcdc; border-top: 2px solid #aaa; }
.cmd-input { flex: 1; height: 42px; margin-left: 5px; background: #fff; border-top: 3px solid #8a8a8a; border-bottom: 2px solid #b5b5b5; border-left: 2px solid #ccc; }
.canvas-row { display: flex; height: 1232px; flex: none; }
.board { display: block; flex: none; }
.drc { fill: url(#hatch); stroke: #e8081f; stroke-width: 1.500; }
.vscroll { flex: 1; background: linear-gradient(90deg, #efefef, #fff 30%, #f3f3f3); }
.hscroll { height: 30px; padding: 8px 0 0 140px; background: linear-gradient(#eeeeee, #fff 50%, #f6f6f6); }
.hscroll i { width: 319px; height: 16px; border-radius: 8px; background: #bdbdbd; }

.statusbar {
  height: 58px;
  display: flex;
  align-items: center;
  padding-left: 18px;
  border-top: 2px solid #666;
  background: linear-gradient(#e8e8e8, #ababab);
  font-size: 24px;
}
.statusbar span { letter-spacing: .7px; }
.statusbar .mark { width: 25px; flex: none; font-size: 20px; letter-spacing: 0; }
.bolt { width: 28px; height: 32px; margin-left: auto; }
.alert { width: 32px; height: 32px; margin: 0 2px 0 14px; }

/* DRC errors window */
.drc-win {
  position: absolute;
  z-index: 2;
  left: 1966px;
  top: 43px;
  width: 593px;
  height: 669px;
  background: #ececec;
  border-radius: 8px 8px 10px 10px;
  box-shadow: 0 14px 60px rgba(0,0,0,.6);
}
.drc-title {
  position: relative;
  height: 45px;
  display: flex;
  align-items: center;
  justify-content: center;
  padding: 3px 5px 0 0;
  border-radius: 8px 8px 0 0;
  background: linear-gradient(#dcdcdc, #b6b6b6);
  border-bottom: 2px solid #666;
  color: #3b4657;
  font-size: 24px;
}
.doc { width: 25px; height: 32px; margin: -3px 12px 0 0; }
.err-list {
  display: flex;
  width: 515px;
  height: 390px;
  margin: 37px 0 0 39px;
  background: #fff;
  border: solid #8e98a5;
  border-width: 5px 4px 7px;
  border-radius: 4px;
  overflow: hidden;
  box-shadow: 0 0 4px rgba(0,0,0,.3);
}
.err-table { width: 477px; flex: none; }
.err-head { height: 33px; display: flex; font-size: 20px; line-height: 30px; }
.col-type { flex: 1; display: flex; justify-content: space-between; align-items: center; padding: 0 12px 0 8px; background: linear-gradient(#c3cbd4, #8f9cab 60%, #a9b3be); border-bottom: 2px solid #8e98a5; }
.col-type i { border: 8px solid transparent; border-bottom: 15px solid #555f6b; border-top: 0; }
.col-layer { width: 91px; padding-left: 9px; background: linear-gradient(#fff, #eee); border-left: 1px solid #8e98a5; border-bottom: 2px solid #c8c8c8; }
.err-row { height: 36px; display: flex; align-items: center; padding: 0 10px 0 90px; color: #f08aa0; }
.err-row svg { width: 32px; height: 32px; flex: none; }
.err-row span { margin: 6px 0 0 11px; letter-spacing: .25px; color: #111; }
.err-row em { margin: 1px 0 0 auto; color: #111; font-style: normal; }
.err-row.sel { background: #ffc020; color: #e85040; }
.err-row.sel span, .err-row.sel em { color: #fff; }
.err-row.open { color: #e00a3c; }
.err-scroll { flex: 1; padding: 154px 6px 0 8px; background: linear-gradient(90deg, #eee, #fff 30%); }
.err-scroll i { height: 168px; border-radius: 8px; background: #bdbdbd; }

.drc-actions {
  display: grid;
  grid-template-columns: 228px 228px;
  column-gap: 31px;
  row-gap: 27px;
  grid-auto-rows: 41px;
  margin: 33px 0 0 52px;
}
.check { display: flex; align-items: center; font-size: 24px; }
.check i { width: 27px; height: 28px; margin-right: 10px; border: 1px solid #aaa; border-radius: 5px; background: linear-gradient(#f4f4f4, #fff); box-shadow: 0 1px 1px rgba(0,0,0,.25); }
.drc-actions button {
  font: 24px 'DejaVu Sans', sans-serif;
  color: #111;
  background: linear-gradient(#fff, #f6f6f6 40%, #e8e8e8 60%, #f4f4f4);
  border: 1px solid #9a9a9a;
  border-bottom: 2px solid #8a8a8a;
  border-radius: 6px;
  padding: 3px 0 0;
}
```
